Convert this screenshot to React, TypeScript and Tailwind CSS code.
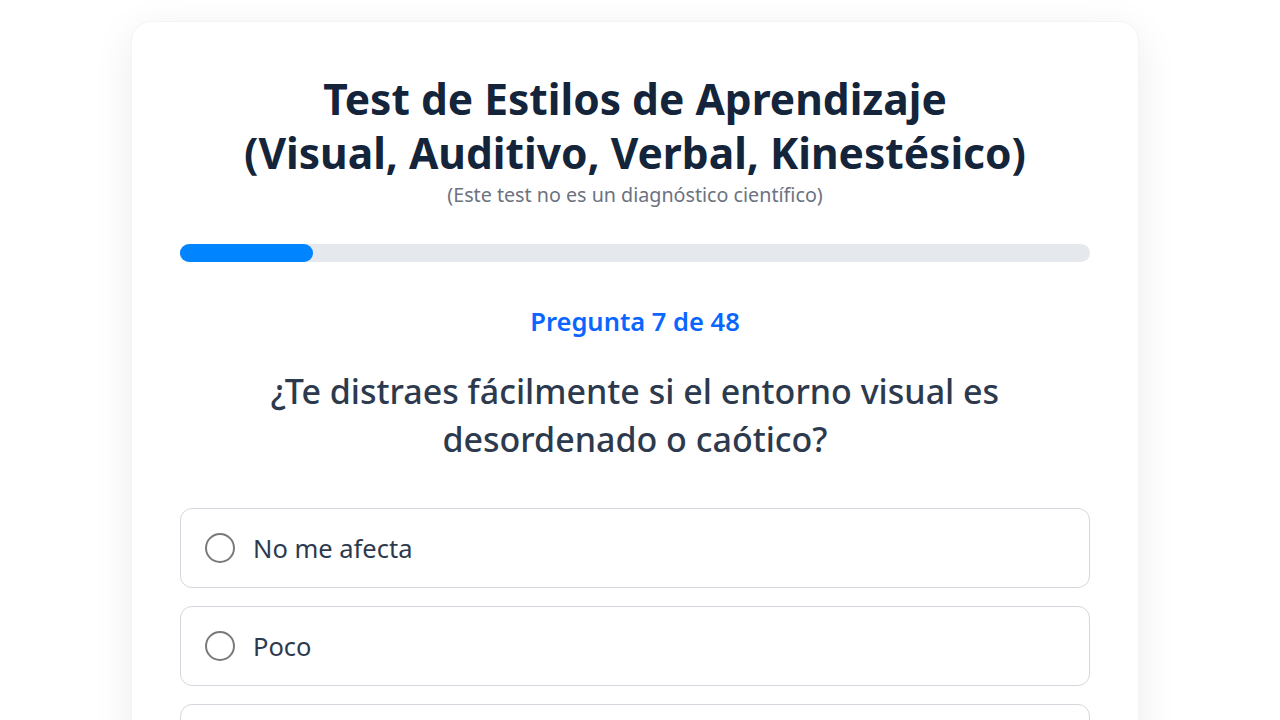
import { useState } from 'react';

const options = ['No me afecta', 'Poco', 'Bastante', 'Mucho'];

export default function App() {
  const [selected, setSelected] = useState<number | null>(null);
  const current = 7;
  const total = 48;

  return (
    <div className="min-h-screen bg-white pt-[21px] font-['Noto_Sans',sans-serif]">
      <div className="ml-[131px] w-[1008px] rounded-[20px] border border-gray-100 bg-white px-12 pt-[50px] pb-12 shadow-[0_10px_40px_rgba(0,0,0,0.08)]">
        <h1 className="text-center text-[42.5px] font-bold leading-[54px] text-[#14243a]">
          Test de Estilos de Aprendizaje
          <br />
          (Visual, Auditivo, Verbal, Kinestésico)
        </h1>
        <p className="mt-[3px] text-center text-[19.7px] leading-6 text-[#6b7280]">
          (Este test no es un diagnóstico científico)
        </p>

        <div className="mt-[37px] h-[18px] w-full rounded-full bg-[#e5e8ed]">
          <div
            className="h-full rounded-full bg-[#0084ff]"
            style={{ width: `${(current / total) * 100}%` }}
          />
        </div>

        <p className="mt-[40px] text-center text-[25.5px] font-semibold text-[#0a66ff]">
          Pregunta {current} de {total}
        </p>

        <h2 className="mx-auto mt-[27px] max-w-[780px] text-center text-[34px] font-medium leading-[48px] text-[#2d3a4e]">
          ¿Te distraes fácilmente si el entorno visual es desordenado o caótico?
        </h2>

        <div className="mt-[45px] flex flex-col gap-[18px]">
          {options.map((opt, i) => (
            <label
              key={opt}
              className="flex h-[80px] cursor-pointer items-center gap-[18px] rounded-xl border border-[#d4d7dd] px-6"
              onClick={() => setSelected(i)}
            >
              <span className="flex h-[30px] w-[30px] items-center justify-center rounded-full border-2 border-[#7a7a7a]">
                {selected === i && <span className="h-3.5 w-3.5 rounded-full bg-[#0084ff]" />}
              </span>
              <span className="text-[25.5px] text-[#2d3a4e]">{opt}</span>
            </label>
          ))}
        </div>
      </div>
    </div>
  );
}
